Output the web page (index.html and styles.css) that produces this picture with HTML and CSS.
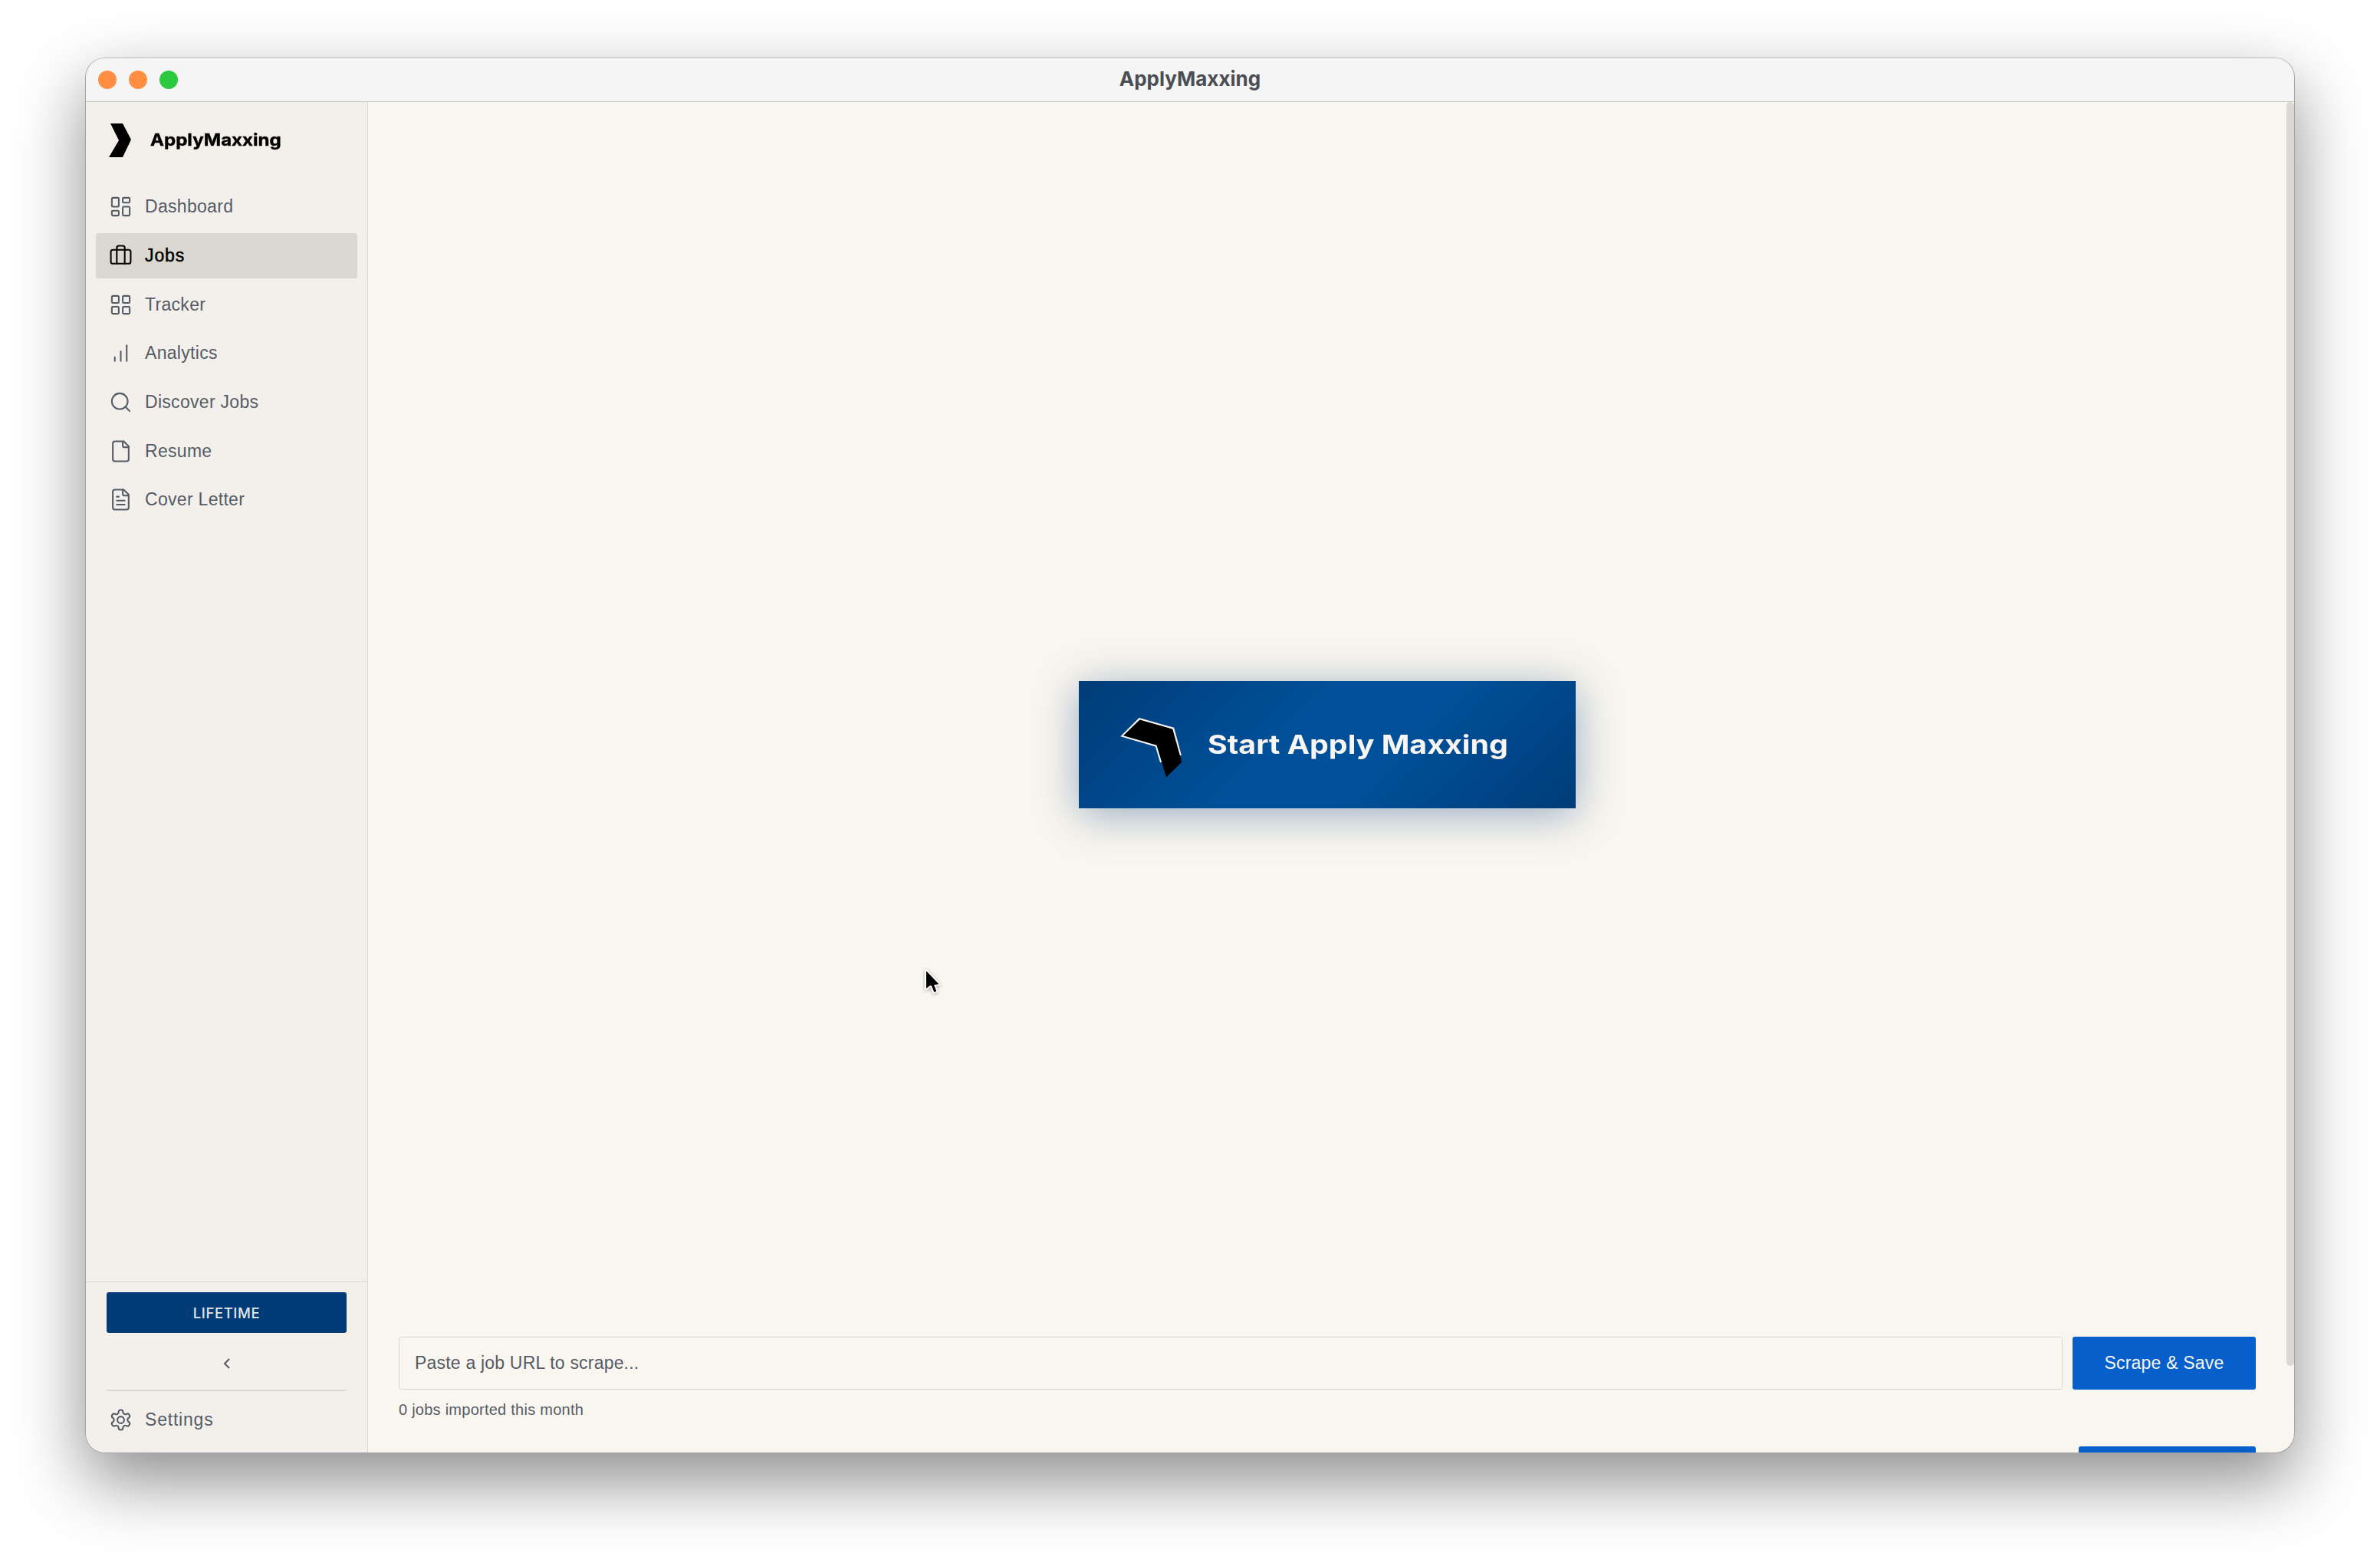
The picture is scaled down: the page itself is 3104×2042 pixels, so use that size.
FILE: index.html
```
<!DOCTYPE html>
<html lang="en">
<head>
  <meta charset="UTF-8">
  <title>ApplyMaxxing</title>
  <link rel="stylesheet" href="styles.css">
</head>
<body>
  <div class="window">
    <header class="titlebar">
      <div class="lights">
        <span class="light"></span>
        <span class="light"></span>
        <span class="light green"></span>
      </div>
      <span class="title">ApplyMaxxing</span>
    </header>

    <div class="app">
      <aside class="sidebar">
        <div class="brand">
          <svg class="logo" viewBox="0 0 30 44"><path d="M2 0h16l11 21-11 23H0l13-22z"/></svg>
          <span class="brand-name">ApplyMaxxing</span>
        </div>

        <nav class="nav">
          <a class="nav-item">
            <svg class="icon" viewBox="0 0 24 24"><rect x="3" y="3" width="7" height="9" rx="1"/><rect x="14" y="3" width="7" height="5" rx="1"/><rect x="14" y="12" width="7" height="9" rx="1"/><rect x="3" y="16" width="7" height="5" rx="1"/></svg>
            <span>Dashboard</span>
          </a>
          <a class="nav-item active">
            <svg class="icon" viewBox="0 0 24 24"><path d="M16 20V4a2 2 0 0 0-2-2h-4a2 2 0 0 0-2 2v16"/><rect x="2" y="6" width="20" height="14" rx="2"/></svg>
            <span>Jobs</span>
          </a>
          <a class="nav-item">
            <svg class="icon" viewBox="0 0 24 24"><rect x="3" y="3" width="7" height="7" rx="1"/><rect x="14" y="3" width="7" height="7" rx="1"/><rect x="14" y="14" width="7" height="7" rx="1"/><rect x="3" y="14" width="7" height="7" rx="1"/></svg>
            <span>Tracker</span>
          </a>
          <a class="nav-item">
            <svg class="icon" viewBox="0 0 24 24"><path d="M12 20V10M18 20V4M6 20v-4"/></svg>
            <span>Analytics</span>
          </a>
          <a class="nav-item">
            <svg class="icon" viewBox="0 0 24 24"><circle cx="11" cy="11" r="8"/><path d="m21 21-4.3-4.3"/></svg>
            <span>Discover Jobs</span>
          </a>
          <a class="nav-item">
            <svg class="icon" viewBox="0 0 24 24"><path d="M15 2H6a2 2 0 0 0-2 2v16a2 2 0 0 0 2 2h12a2 2 0 0 0 2-2V7z"/><path d="M14 2v4a2 2 0 0 0 2 2h4"/></svg>
            <span>Resume</span>
          </a>
          <a class="nav-item">
            <svg class="icon" viewBox="0 0 24 24"><path d="M15 2H6a2 2 0 0 0-2 2v16a2 2 0 0 0 2 2h12a2 2 0 0 0 2-2V7z"/><path d="M14 2v4a2 2 0 0 0 2 2h4M10 9H8M16 13H8M16 17H8"/></svg>
            <span>Cover Letter</span>
          </a>
        </nav>

        <div class="sidebar-footer">
          <div class="plan">LIFETIME</div>
          <button class="collapse">
            <svg class="chevron" viewBox="0 0 10 16"><path d="M8 2 2 8l6 6"/></svg>
          </button>
          <a class="nav-item settings">
            <svg class="icon" viewBox="0 0 24 24"><path d="M12.22 2h-.44a2 2 0 0 0-2 2v.18a2 2 0 0 1-1 1.73l-.43.25a2 2 0 0 1-2 0l-.15-.08a2 2 0 0 0-2.73.73l-.22.38a2 2 0 0 0 .73 2.73l.15.1a2 2 0 0 1 1 1.72v.51a2 2 0 0 1-1 1.74l-.15.09a2 2 0 0 0-.73 2.73l.22.38a2 2 0 0 0 2.73.73l.15-.08a2 2 0 0 1 2 0l.43.25a2 2 0 0 1 1 1.73V20a2 2 0 0 0 2 2h.44a2 2 0 0 0 2-2v-.18a2 2 0 0 1 1-1.73l.43-.25a2 2 0 0 1 2 0l.15.08a2 2 0 0 0 2.73-.73l.22-.39a2 2 0 0 0-.73-2.73l-.15-.08a2 2 0 0 1-1-1.74v-.5a2 2 0 0 1 1-1.74l.15-.09a2 2 0 0 0 .73-2.73l-.22-.38a2 2 0 0 0-2.73-.73l-.15.08a2 2 0 0 1-2 0l-.43-.25a2 2 0 0 1-1-1.73V4a2 2 0 0 0-2-2z"/><circle cx="12" cy="12" r="3.4"/></svg>
            <span>Settings</span>
          </a>
        </div>
      </aside>

      <main class="main">
        <div class="hero">
          <button class="start">
            <svg class="start-icon" viewBox="0 0 94 94">
              <path class="start-edge" d="M59.500 70 53 48.300 9 35.500 31 13.500l44 12.500 9.500 35"/>
              <path class="start-shape" d="M10 35.300 31.500 14.500l42.800 12.200 12 43L66 89.500 53.500 47.800z"/>
            </svg>
            <span class="start-text">Start Apply Maxxing</span>
          </button>
        </div>

        <div class="scrape">
          <div class="scrape-row">
            <div class="url-input">Paste a job URL to scrape...</div>
            <button class="btn">Scrape &amp; Save</button>
          </div>
          <div class="hint">0 jobs imported this month</div>
          <button class="btn next"></button>
        </div>
      </main>
      <div class="scrollbar"></div>
    </div>
  </div>

  <svg class="cursor" viewBox="0 0 26 38"><path d="M4 4v23l4.700-3.700h2.200l3.400 8.400 3-1.200-3.200-8.200 6.400-1z"/></svg>
</body>
</html>
```
FILE: styles.css
```
* {
  box-sizing: border-box;
}
body {
  margin: 0;
  padding: 75px 111px;
  height: 2042px;
  background: #fff;
  font-family: "Liberation Sans", Arial, sans-serif;
  font-size: 23px;
  letter-spacing: 0.2px;
  color: #555b66;
  overflow: hidden;
}
button {
  border: 0;
  margin: 0;
  padding: 0;
  font: inherit;
  letter-spacing: inherit;
}
.window {
  display: flex;
  flex-direction: column;
  width: 2882px;
  height: 1820px;
  border: 1px solid #a3a3a3;
  border-top-color: #bdbdbd;
  border-radius: 26px;
  background: #f9f6ef;
  overflow: hidden;
  box-shadow: 0 36px 90px rgba(0, 0, 0, 0.45);
}

/* title bar */
.titlebar {
  display: grid;
  grid-template-columns: 1fr auto 1fr;
  align-items: center;
  height: 57px;
  flex: none;
  padding: 0 16px;
  background: #f5f5f5;
  border-bottom: 1px solid #c9c9c7;
}
.lights {
  display: flex;
  gap: 16px;
}
.light {
  width: 24px;
  height: 24px;
  border-radius: 50%;
  background: #ff8e42;
}
.light.green {
  background: #2bc840;
}
.title {
  padding-bottom: 3px;
  font-family: Inter, sans-serif;
  font-size: 26px;
  font-weight: 700;
  letter-spacing: 0;
  color: #4a4d53;
}

.app {
  display: flex;
  flex: 1;
  min-height: 0;
}

/* sidebar */
.sidebar {
  display: flex;
  flex-direction: column;
  width: 368px;
  flex: none;
  background: #f3f0eb;
  border-right: 1px solid #dad8d1;
}
.brand {
  display: flex;
  align-items: center;
  gap: 24px;
  height: 107px;
  padding: 0 0 7px 30px;
}
.logo {
  width: 30px;
  height: 44px;
}
.brand-name {
  padding-bottom: 3px;
  font-family: Inter, sans-serif;
  font-size: 22px;
  font-weight: 700;
  line-height: 28px;
  letter-spacing: 0;
  color: #000;
  transform: scaleX(1.095);
  transform-origin: left;
  -webkit-text-stroke: 0.4px #000;
}
.nav {
  display: flex;
  flex-direction: column;
  gap: 4px;
  padding: 0 13px;
}
.nav-item {
  display: flex;
  align-items: center;
  gap: 16px;
  height: 59.7px;
  padding-left: 17px;
  border-radius: 3px;
  letter-spacing: 0.3px;
}
.nav-item.active {
  background: #dad8d1;
  color: #000;
  letter-spacing: 0.9px;
  -webkit-text-stroke: 0.5px #000;
}
.icon {
  width: 31px;
  height: 31px;
  flex: none;
  fill: none;
  stroke: currentColor;
  stroke-width: 1.6;
  stroke-linecap: round;
  stroke-linejoin: round;
}
.sidebar-footer {
  display: flex;
  flex-direction: column;
  height: 223px;
  margin-top: auto;
  padding: 13px 27px 0;
  border-top: 1px solid #dad8d1;
}
.plan {
  height: 53px;
  border-radius: 3px;
  background: #003c78;
  color: #e6e8ea;
  font-family: Inter, sans-serif;
  font-size: 18.5px;
  font-weight: 500;
  line-height: 54px;
  letter-spacing: 0.6px;
  text-align: center;
}
.collapse {
  display: flex;
  align-items: center;
  justify-content: center;
  height: 76px;
  padding-top: 6px;
  background: none;
  border-bottom: 2px solid #dad8d1;
}
.chevron {
  width: 10px;
  height: 16px;
  fill: none;
  stroke: #555b66;
  stroke-width: 2;
}
.settings {
  height: 74px;
  padding-left: 3px;
  letter-spacing: 0.8px;
}

/* main area */
.main {
  display: flex;
  flex-direction: column;
  flex: 1;
  padding: 0 40px;
}
.hero {
  display: flex;
  flex: none;
  justify-content: center;
  align-items: flex-start;
  padding-top: 755px;
  height: 1610px;
}
.start {
  display: flex;
  align-items: center;
  gap: 26px;
  width: 648px;
  height: 166px;
  padding-left: 48px;
  background: linear-gradient(135deg, #003c78 0%, #005099 42%, #005099 62%, #003c78 100%);
  box-shadow: 0 8px 56px rgba(0, 60, 130, 0.4);
}
.start-icon {
  width: 94px;
  height: 94px;
}
.start-shape {
  fill: #000;
}
.start-edge {
  fill: none;
  stroke: #f5f5f5;
  stroke-width: 2.8;
}
.start-text {
  font-family: Inter, sans-serif;
  font-size: 33.5px;
  font-weight: 700;
  letter-spacing: 0;
  white-space: nowrap;
  color: #f8f5f2;
  transform: scaleX(1.174);
  transform-origin: left;
}
.scrape {
  display: flex;
  flex-direction: column;
  flex: none;
}
.scrape-row {
  display: flex;
  gap: 13px;
}
.url-input {
  flex: 1;
  height: 69px;
  padding-left: 20px;
  border: 1px solid #d9d8d2;
  border-radius: 3px;
  line-height: 67px;
}
.btn {
  width: 239px;
  height: 69px;
  border-radius: 3px;
  background: #065fca;
  color: #f9f6ef;
}
.hint {
  height: 74px;
  padding-top: 14px;
  font-size: 20px;
  line-height: 24px;
  letter-spacing: 0.25px;
}
.btn.next {
  width: 231px;
  align-self: flex-end;
}
.scrollbar {
  width: 10px;
  height: 1648px;
  border-radius: 5px;
  background: #dad8d1;
}

/* mouse pointer over the page */
.cursor {
  position: absolute;
  left: 1204px;
  top: 1262px;
  width: 26px;
  height: 38px;
  fill: #000;
  stroke: #fff;
  stroke-width: 4;
  stroke-linejoin: round;
  paint-order: stroke;
  filter: drop-shadow(0 1px 2px rgba(0, 0, 0, 0.3));
}
```
